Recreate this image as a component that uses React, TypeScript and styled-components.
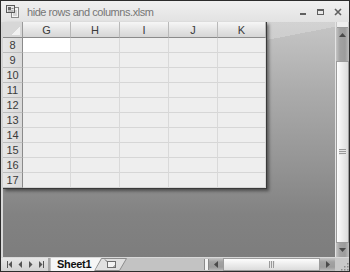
import React from 'react';
import styled, {createGlobalStyle} from 'styled-components';

const Page = createGlobalStyle`
  body {
    margin: 0;
    background: #ffffff;
  }
`;

const Frame = styled.div`
  width: 350px;
  height: 272px;
  box-sizing: border-box;
  border: 1px solid #2c2c2c;
  background: #d9d9d9;
  display: flex;
  flex-direction: column;
  font-family: "Liberation Sans", Arial, sans-serif;
  overflow: hidden;
`;

const TitleBar = styled.div`
  height: 21px;
  flex: none;
  display: flex;
  align-items: center;
  padding: 0 6px 0 4px;
  background: linear-gradient(#f0f0f0, #e2e2e2);
`;

const Title = styled.span`
  margin-left: 7px;
  font-size: 11px;
  letter-spacing: -0.45px;
  color: #767676;
`;

const Controls = styled.div`
  margin-left: auto;
  display: flex;
  align-items: center;
  gap: 9px;
  margin-right: 1px;
`;

const Body = styled.div`
  flex: 1;
  display: flex;
  padding-left: 2px;
  min-height: 0;
`;

const Workspace = styled.div`
  flex: 1;
  background:
    linear-gradient(169deg, rgba(255, 255, 255, 0.22) 0 68px, transparent 68px),
    linear-gradient(180deg, #c6c6c6 0%, #ababab 30%, #939393 62%, #828282 82%, #7d7d7d 100%);
`;

const Sheet = styled.div`
  display: grid;
  grid-template-columns: 20px 48px 49px 49px 49px 48px;
  grid-template-rows: 16px repeat(10, 15px);
  width: max-content;
  border-right: 1px solid #3a3a3a;
  border-bottom: 1px solid #3a3a3a;
  box-shadow: 2px 2px 3px rgba(0, 0, 0, 0.45);
  background: #eeeeee;
`;

const Corner = styled.div`
  box-sizing: border-box;
  background: #d7d7d7;
  border-right: 1px solid #9a9a9a;
  border-bottom: 1px solid #8a8a8a;
  display: flex;
  align-items: flex-end;
  justify-content: flex-end;
  padding: 0 2px 2px 0;
`;

const CornerMark = styled.div`
  width: 9px;
  height: 9px;
  background: linear-gradient(135deg, transparent 50%, #f2f2f2 50%);
`;

const ColHeader = styled.div`
  box-sizing: border-box;
  background: linear-gradient(#f6f6f6, #e2e2e2 60%, #d6d6d6);
  border-right: 1px solid #b9b9b9;
  border-bottom: 1px solid #8a8a8a;
  display: flex;
  align-items: center;
  justify-content: center;
  font-size: 11px;
  color: #3a3a3a;
`;

const RowHeader = styled.div`
  box-sizing: border-box;
  background: linear-gradient(90deg, #e6e6e6, #dadada);
  border-right: 1px solid #8a8a8a;
  border-bottom: 1px solid #bdbdbd;
  display: flex;
  align-items: center;
  justify-content: center;
  font-size: 11px;
  color: #3a3a3a;
`;

const Cell = styled.div<{ $active?: boolean }>`
  box-sizing: border-box;
  background: ${p => (p.$active ? '#ffffff' : '#eeeeee')};
  border-right: 1px solid #d9d9d9;
  border-bottom: 1px solid #d6d6d6;
`;

const VScroll = styled.div`
  width: 13px;
  flex: none;
  border-left: 1px solid #e4e4e4;
  display: flex;
  flex-direction: column;
  background: #c8c8c8;
`;

const SplitBoxV = styled.div`
  height: 5px;
  margin: 0 1px;
  background: #eeeeee;
  border-bottom: 1px solid #9a9a9a;
`;

const Track = styled.div<{ $size: number; $vertical?: boolean }>`
  flex: none;
  ${p => (p.$vertical ? `height: ${p.$size}px;` : `width: ${p.$size}px;`)}
  background: ${p => (p.$vertical
    ? 'linear-gradient(90deg, #c4c4c4, #a2a2a2 30%, #9c9c9c 70%, #bdbdbd)'
    : 'linear-gradient(#c4c4c4, #a2a2a2 30%, #9c9c9c 70%, #bdbdbd)')};
  display: flex;
  align-items: ${p => (p.$vertical ? 'flex-start' : 'center')};
  justify-content: center;
  padding-top: ${p => (p.$vertical ? '5px' : '0')};
  box-sizing: border-box;
`;

const Thumb = styled.div<{ $size: number; $vertical?: boolean }>`
  flex: none;
  box-sizing: border-box;
  ${p => (p.$vertical ? `height: ${p.$size}px;` : `width: ${p.$size}px;`)}
  border: 1px solid #9c9c9c;
  background: ${p => (p.$vertical
    ? 'linear-gradient(90deg, #fdfdfd, #ececec 50%, #dcdcdc)'
    : 'linear-gradient(#fdfdfd, #ececec 50%, #dcdcdc)')};
  display: flex;
  align-items: center;
  justify-content: center;
`;

const Grip = styled.div<{ $vertical?: boolean }>`
  width: ${p => (p.$vertical ? '7px' : '6px')};
  height: ${p => (p.$vertical ? '6px' : '7px')};
  background: ${p => (p.$vertical
    ? 'repeating-linear-gradient(#9a9a9a 0 1px, #e6e6e6 1px 2px)'
    : 'repeating-linear-gradient(90deg, #9a9a9a 0 1px, #e6e6e6 1px 2px)')};
`;

const BottomBar = styled.div`
  height: 14px;
  flex: none;
  display: flex;
  align-items: stretch;
  background: #c3c3c3;
  border-top: 1px solid #d8d8d8;
  box-sizing: border-box;
`;

const Nav = styled.div`
  width: 49px;
  flex: none;
  display: flex;
  align-items: center;
  justify-content: space-around;
  padding: 0 2px 0 4px;
  box-sizing: border-box;
  background: linear-gradient(#e6e6e6, #d2d2d2);
  border-right: 2px solid #a8a8a8;
`;

const Tabs = styled.div`
  display: flex;
  align-items: stretch;
  margin-left: 1px;
`;

const SheetTab = styled.div`
  width: 50px;
  padding-left: 6px;
  box-sizing: border-box;
  background: #f6f6f6;
  clip-path: polygon(0 0, 100% 0, calc(100% - 7px) 100%, 0 100%);
  font-size: 11px;
  line-height: 13px;
  color: #111111;
  font-weight: bold;
  letter-spacing: -0.3px;
  position: relative;
  z-index: 1;
`;

const NewTab = styled.div`
  width: 33px;
  margin-left: -7px;
  display: flex;
  align-items: stretch;
`;

const Filler = styled.div`
  flex: 1;
`;

const HScroll = styled.div`
  width: 131px;
  flex: none;
  display: flex;
  align-items: stretch;
`;

const SplitBoxH = styled.div`
  width: 3px;
  background: #f4f4f4;
  border-left: 1px solid #8a8a8a;
  border-right: 1px solid #8a8a8a;
  margin: 1px 0;
`;

const SizeGrip = styled.div`
  width: 14px;
  flex: none;
  background: #c8c8c8;
  display: flex;
  align-items: flex-end;
  justify-content: flex-end;
`;

const cols = ['G', 'H', 'I', 'J', 'K'];
const rows = [8, 9, 10, 11, 12, 13, 14, 15, 16, 17];

function Arrow({dir}: { dir: 'up' | 'down' | 'left' | 'right' }) {
  const pts = {
    up: '0,4 3.5,0 7,4',
    down: '0,0 7,0 3.5,4',
    left: '4,0 4,7 0,3.5',
    right: '0,0 0,7 4,3.5'
  }[dir];
  const vertical = dir === 'up' || dir === 'down';
  return (
    <svg width={vertical ? 7 : 4} height={vertical ? 4 : 7}>
      <polygon points={pts} fill="#4a4a4a"/>
    </svg>
  );
}

function NavIcon({kind}: { kind: 'first' | 'prev' | 'next' | 'last' }) {
  return (
    <svg width="6" height="7">
      {kind === 'first' && <rect x="0" y="0" width="1" height="7" fill="#555"/>}
      {kind === 'last' && <rect x="5" y="0" width="1" height="7" fill="#555"/>}
      {(kind === 'first' || kind === 'prev') && <polygon points="5,0 5,7 1.5,3.5" fill="#555"/>}
      {(kind === 'next' || kind === 'last') && <polygon points="1,0 1,7 4.5,3.5" fill="#555"/>}
    </svg>
  );
}

function DocIcon() {
  return (
    <svg width="15" height="15" viewBox="0 0 15 15">
      <rect x="6.5" y="3.5" width="7" height="10" fill="#f4f4f4" stroke="#8a8a8a"/>
      <line x1="8" y1="7" x2="12" y2="7" stroke="#b5b5b5"/>
      <line x1="8" y1="9" x2="12" y2="9" stroke="#b5b5b5"/>
      <line x1="8" y1="11" x2="12" y2="11" stroke="#b5b5b5"/>
      <rect x="1.5" y="1.5" width="8" height="7" fill="#e8e8e8" stroke="#5a5a5a"/>
      <rect x="3" y="3" width="3" height="3" fill="#6a6a6a"/>
      <line x1="6.5" y1="4.5" x2="8.5" y2="4.5" stroke="#8a8a8a"/>
      <line x1="3" y1="7" x2="8.5" y2="7" stroke="#8a8a8a"/>
    </svg>
  );
}

function WindowButtons() {
  return (
    <Controls>
      <svg width="8" height="8">
        <rect x="1" y="5" width="6" height="2" fill="#606060"/>
      </svg>
      <svg width="9" height="8">
        <rect x="1.5" y="1.5" width="6" height="5" fill="none" stroke="#606060"/>
        <rect x="1" y="1" width="7" height="2" fill="#606060"/>
      </svg>
      <svg width="8" height="8">
        <path d="M1 1 L7 7 M7 1 L1 7" stroke="#606060" strokeWidth="1.6"/>
      </svg>
    </Controls>
  );
}

function NewSheetTab() {
  return (
    <NewTab>
      <svg width="33" height="13">
        <polygon points="7.5,0.5 32.5,0.5 25.5,12.5 0.5,12.5" fill="#e0e0e0" stroke="#8c8c8c"/>
        <rect x="13.5" y="3.5" width="8" height="6" fill="#f4f4f4" stroke="#6e6e6e"/>
        <path d="M11 1.5 L13.5 4" stroke="#6e6e6e"/>
        <path d="M19 9.5 L21.5 7" stroke="#6e6e6e"/>
      </svg>
    </NewTab>
  );
}

export default function App() {
  return (
    <>
      <Page/>
      <Frame>
        <TitleBar>
          <DocIcon/>
          <Title>hide rows and columns.xlsm</Title>
          <WindowButtons/>
        </TitleBar>
        <Body>
          <Workspace>
            <Sheet>
              <Corner><CornerMark/></Corner>
              {cols.map(c => <ColHeader key={c}>{c}</ColHeader>)}
              {rows.map(r => (
                <React.Fragment key={r}>
                  <RowHeader>{r}</RowHeader>
                  {cols.map(c => <Cell key={c} $active={r === 8 && c === 'G'}/>)}
                </React.Fragment>
              ))}
            </Sheet>
          </Workspace>
          <VScroll>
            <SplitBoxV/>
            <Track $vertical $size={33}><Arrow dir="up"/></Track>
            <Thumb $vertical $size={182}><Grip $vertical/></Thumb>
            <Track $vertical $size={14}><Arrow dir="down"/></Track>
          </VScroll>
        </Body>
        <BottomBar>
          <Nav>
            <NavIcon kind="first"/>
            <NavIcon kind="prev"/>
            <NavIcon kind="next"/>
            <NavIcon kind="last"/>
          </Nav>
          <Tabs>
            <SheetTab>Sheet1</SheetTab>
            <NewSheetTab/>
          </Tabs>
          <Filler/>
          <HScroll>
            <SplitBoxH/>
            <Track $size={14}><Arrow dir="left"/></Track>
            <Thumb $size={97}><Grip/></Thumb>
            <Track $size={15}><Arrow dir="right"/></Track>
          </HScroll>
          <SizeGrip>
            <svg width="10" height="10">
              {[[8, 2], [8, 5], [5, 5], [8, 8], [5, 8], [2, 8]].map(([x, y]) => (
                <rect key={`${x}-${y}`} x={x} y={y} width="1.5" height="1.5" fill="#8a8a8a"/>
              ))}
            </svg>
          </SizeGrip>
        </BottomBar>
      </Frame>
    </>
  );
}
